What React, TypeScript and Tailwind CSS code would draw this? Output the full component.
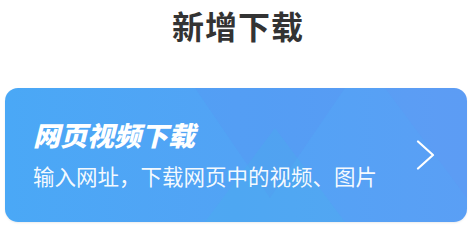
export default function App() {
  return (
    <div className="w-[476px] h-[227px] bg-white font-['Noto_Sans_CJK_SC','Noto_Sans',sans-serif] overflow-hidden">
      <div className="h-[50px] flex items-center justify-center">
        <h1 className="text-[32px] leading-[32px] font-bold text-[#333333] tracking-[1px]">新增下载</h1>
      </div>
      <div className="pl-[5px] pr-[9px] pt-[38px]">
        <div className="relative h-[134px] rounded-[13px] overflow-hidden bg-gradient-to-r from-[#4aa8f6] via-[#52a3f5] to-[#5a9ff5] shadow-[0_1px_2px_rgba(0,0,0,0.08)]">
          <svg className="absolute inset-0 w-full h-full" viewBox="0 0 462 134" preserveAspectRatio="none">
            <polygon points="190,0 340,0 265,110" fill="#5a8ff3" opacity="0.22" />
            <polygon points="200,134 340,134 270,40" fill="#3fc0e8" opacity="0.16" />
            <polygon points="380,0 462,0 462,110" fill="#6a90f6" opacity="0.18" />
          </svg>
          <div className="relative h-full flex items-center justify-between pl-[28px] pr-[31px]">
            <div className="flex flex-col gap-[12px] text-white">
              <div className="text-[27px] leading-[30px] font-black italic">网页视频下载</div>
              <div className="text-[21.5px] leading-[28px] text-white/95">输入网址，下载网页中的视频、图片</div>
            </div>
            <svg width="20" height="30" viewBox="0 0 20 30" fill="none" stroke="white" strokeWidth="2.2" strokeLinecap="round" strokeLinejoin="round">
              <polyline points="2,1.5 17,15 2,28.5" />
            </svg>
          </div>
        </div>
      </div>
    </div>
  );
}
